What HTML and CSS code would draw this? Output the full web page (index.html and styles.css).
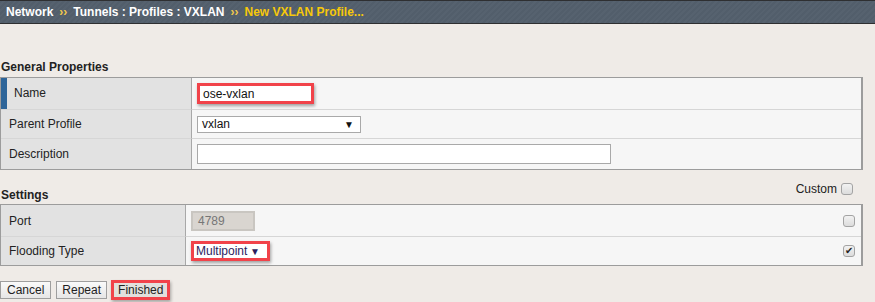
FILE: index.html
```html
<!DOCTYPE html>
<html lang="en">
<head>
    <meta charset="UTF-8">
    <title>New VXLAN Profile</title>
    <link rel="stylesheet" href="styles.css">
</head>
<body>
    <div class="crumbs">
        <span>Network</span>
        <span class="sep">&rsaquo;&rsaquo;</span>
        <span>Tunnels : Profiles : VXLAN</span>
        <span class="sep">&rsaquo;&rsaquo;</span>
        <span class="current">New VXLAN Profile...</span>
    </div>

    <div class="section-title general">General Properties</div>
    <div class="props first">
        <div class="label active">Name</div>
        <div class="value"><span class="field text name marked">ose-vxlan</span></div>

        <div class="label">Parent Profile</div>
        <div class="value"><span class="field select parent">vxlan<i>&#9660;</i></span></div>

        <div class="label">Description</div>
        <div class="value"><span class="field text desc"></span></div>
    </div>

    <div class="section-title settings">
        <span>Settings</span>
        <span class="custom">Custom <span class="check"></span></span>
    </div>
    <div class="props second">
        <div class="label">Port</div>
        <div class="value split"><span class="field text port">4789</span><span class="check"></span></div>

        <div class="label">Flooding Type</div>
        <div class="value split"><span class="field select flood marked">Multipoint<i>&#9660;</i></span><span class="check on">&#10004;</span></div>
    </div>

    <div class="buttons">
        <button>Cancel</button>
        <button class="repeat">Repeat</button>
        <button class="marked">Finished</button>
    </div>
</body>
</html>
```

FILE: styles.css
```css
/* Page */
body {
    margin: 0;
    width: 875px;
    height: 302px;
    overflow: hidden;
    background: #efebe7;
    font-family: "Liberation Sans", Arial, sans-serif;
    font-size: 12px;
    color: #222;
}

/* Breadcrumb bar */
.crumbs {
    height: 22px;
    border-top: 1px solid #2e2f31;
    border-bottom: 1px solid #2e2f31;
    background: repeating-linear-gradient(135deg, #525e6b 0 2px, #56626f 2px 4px);
    color: #fff;
    font-weight: bold;
    font-size: 12px;
    line-height: 23px;
    padding-left: 6px;
    display: flex;
    gap: 6px;
}

.crumbs .sep {
    color: #f2c94c;
    font-size: 12px;
}

.crumbs .current {
    color: #f7c80a;
}

/* Section headings */
.section-title {
    font-weight: bold;
    padding-left: 1px;
    height: 14px;
    line-height: 14px;
}

.section-title.general {
    margin-top: 36px;
    margin-bottom: 3px;
}

.section-title.settings {
    margin-top: 18px;
    margin-bottom: 2px;
    display: flex;
    justify-content: space-between;
    align-items: flex-end;
    padding-right: 22px;
}

.custom {
    display: flex;
    align-items: center;
    gap: 4px;
    font-weight: normal;
    position: relative;
    top: -6px;
}

/* Property grids */
.props {
    width: 860px;
    display: grid;
    border: 1px solid #9c9c9c;
    border-right-width: 2px;
}

.props.first {
    grid-template-columns: 191px 1fr;
    grid-template-rows: 31px 29px 31px;
}

.props.second {
    grid-template-columns: 185px 1fr;
    grid-template-rows: 31px 29px;
}

.props .label,
.props .value {
    display: flex;
    align-items: center;
    border-top: 1px solid #d6d6d6;
}

.props .label:first-child,
.props .label:first-child + .value {
    border-top: none;
}

.props .label {
    background: #e2e2e2;
    border-right: 1px solid #a8a8a8;
    padding-left: 8px;
}

.props .label.active {
    box-shadow: inset 6px 0 0 #2e6599;
    padding-left: 13px;
    padding-bottom: 2px;
}

.props .value {
    background: #f6f6f6;
    padding-left: 5px;
}

.props .value.split {
    justify-content: space-between;
    padding-right: 6px;
}

/* Form fields */
.field {
    display: inline-flex;
    align-items: center;
    box-sizing: border-box;
    background: #fff;
    border: 1px solid #a9a9a9;
    font-size: 12px;
    color: #111;
    padding-left: 4px;
}

.field.text {
    height: 20px;
}

.field.desc {
    width: 414px;
}

.field.parent {
    width: 164px;
    height: 17px;
    justify-content: space-between;
    padding-right: 6px;
}

.field i {
    font-style: normal;
    font-size: 10px;
}

.field.marked {
    border: 3px solid #f1434a;
    box-shadow: 1px 2px 3px rgba(0, 0, 0, 0.35);
}

.field.name {
    width: 117px;
    height: 21px;
    padding-left: 3px;
}

.field.port {
    width: 64px;
    background: #d9d5d0;
    color: #767676;
    border: 2px solid #c9c6c1;
    padding-left: 5px;
}

.field.flood {
    width: 79px;
    height: 20px;
    padding-left: 2px;
    padding-right: 7px;
    justify-content: space-between;
    color: #2b1d5e;
}

/* Checkboxes */
.check {
    width: 12px;
    height: 12px;
    box-sizing: border-box;
    border: 1px solid #a3a3a3;
    border-radius: 3px;
    background: linear-gradient(#f2f2f2, #dcdcdc);
    display: inline-flex;
    align-items: center;
    justify-content: center;
    font-size: 10px;
    line-height: 1;
    color: #222;
}

/* Buttons */
.buttons {
    display: flex;
    align-items: center;
    gap: 4px;
    margin-top: 14px;
}

.buttons button {
    font-family: "Liberation Sans", Arial, sans-serif;
    font-size: 12px;
    height: 18px;
    padding: 0 6px;
    background: linear-gradient(#fafafa, #e6e6e6);
    border: 1px solid #9e9e9e;
    color: #222;
    margin: 0;
}

.buttons button:first-child {
    margin-right: 1px;
}

.buttons button.repeat {
    padding: 0 5px;
}

.buttons button.marked {
    border: 3px solid #f1434a;
    background: #e2e0dc;
    height: 20px;
    padding: 0 4px;
    box-shadow: 1px 2px 3px rgba(0, 0, 0, 0.3);
}
```
